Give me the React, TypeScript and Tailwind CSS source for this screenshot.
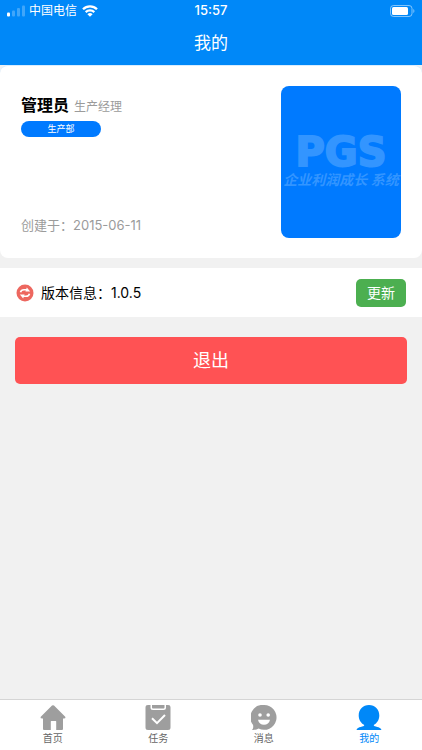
import React from 'react';

const HomeIcon = () => (
  <svg viewBox="0 0 26 26" className="size-[26px]" fill="currentColor" aria-hidden="true">
    <path d="M12 .6a1.500 1.500 0 0 1 2 0L25 11.500c.8.900.4 1.900-.7 1.900H23v10.300c0 .8-.5 1.300-1.300 1.300H16.200v-8.600c0-.3-.2-.5-.5-.5h-4.400c-.3 0-.5.2-.5.5V25H4.300C3.500 25 3 24.500 3 23.700V13.400H1.700c-1.100 0-1.500-1-.7-1.900z" />
  </svg>
);

const TaskIcon = () => (
  <svg viewBox="0 0 26 26" className="size-[26px]" aria-hidden="true">
    <path fill="currentColor" d="M3 0h2.500v2.500C5.500 4.200 6.300 5 8 5h10.500C20.200 5 21 4.200 21 2.500V0h2c1.700 0 2.500.8 2.500 2.500v20c0 1.700-.8 2.500-2.500 2.500H3C1.300 25 .5 24.200.5 22.500v-20C.5.800 1.300 0 3 0z" />
    <path fill="currentColor" d="M7 0h12.500v2.200c0 .9-.4 1.300-1.300 1.300H8.300C7.400 3.500 7 3.100 7 2.200z" />
    <path d="M7 13.200l5 5L20 10" fill="none" stroke="white" strokeWidth="2" />
  </svg>
);

const MessageIcon = () => (
  <svg viewBox="0 0 26 26" className="size-[26px]" aria-hidden="true">
    <path fill="currentColor" d="M13.200 0a12.400 12.400 0 1 1-5.600 23.500c-1.800 1.100-4.300 1.700-6.600 1.500 1.300-1.200 1.400-2.900 1.100-5A12.400 12.400 0 0 1 13.200 0z" />
    <circle cx="9" cy="10" r="1.800" fill="white" />
    <circle cx="17.200" cy="10" r="1.800" fill="white" />
    <path fill="white" d="M7 14.800h12c-.6 3.200-3 5-6 5s-5.400-1.800-6-5z" />
  </svg>
);

const UserIcon = () => (
  <svg viewBox="0 0 26 26" className="size-[26px]" fill="currentColor" aria-hidden="true">
    <path d="M13 0c6 0 10.300 4.600 10.300 10.500 0 4.200-2.300 7.700-5.600 9.600 0 2.200 6.800 1.300 7.800 4.900H.5c1-3.600 7.800-2.700 7.800-4.900-3.300-1.900-5.600-5.400-5.600-9.600C2.700 4.600 7 0 13 0z" />
  </svg>
);

const tabs = [
  { label: '首页', Icon: HomeIcon, active: false },
  { label: '任务', Icon: TaskIcon, active: false },
  { label: '消息', Icon: MessageIcon, active: false },
  { label: '我的', Icon: UserIcon, active: true },
];

function StatusBar() {
  return (
    <div className="grid h-5 grid-cols-3 items-center px-[7px] pt-px text-xs">
      <div className="flex items-center gap-1">
        <svg viewBox="0 0 18 12" className="h-3 w-[18px]" fill="white" aria-hidden="true">
          <rect x="0" y="7.500" width="3" height="4" rx="1" />
          <rect x="5" y="5.500" width="3" height="6" rx="1" opacity=".25" />
          <rect x="10" y="3" width="3" height="8.500" rx="1" opacity=".25" />
          <rect x="15" y="0.500" width="3" height="11" rx="1" opacity=".25" />
        </svg>
        <span className="whitespace-nowrap">中国电信</span>
        <svg viewBox="0 0 16 12" className="ml-px h-3 w-4" aria-hidden="true">
          <path d="M1 4.300a10 10 0 0 1 14 0M3.700 7.200a6.200 6.200 0 0 1 8.600 0" fill="none" stroke="white" strokeWidth="2.300" />
          <path d="M8 11.800L5.400 9.300a3.700 3.700 0 0 1 5.200 0z" fill="white" />
        </svg>
      </div>
      <time className="text-center text-[13px] font-medium">15:57</time>
      <svg viewBox="0 0 25 12" className="h-3 w-[25px] justify-self-end" aria-label="电量" role="img">
        <rect x=".5" y=".5" width="21.500" height="11" rx="3" fill="none" stroke="white" opacity=".5" />
        <rect x="2" y="2" width="16" height="8" rx="1.500" fill="white" />
        <path d="M23.300 4v4c1.500-.5 1.500-3.500 0-4z" fill="white" opacity=".5" />
      </svg>
    </div>
  );
}

export default function App() {
  return (
    <div className="flex min-h-screen flex-col bg-[#f1f1f1] font-['Inter','Noto_Sans_CJK_SC',sans-serif] text-black">
      <header className="bg-[#0088f8] text-white">
        <StatusBar />
        <h1 className="h-[45px] text-center text-[17px] leading-[47px]">我的</h1>
      </header>

      <main className="flex-1">
        <section className="flex justify-between rounded-lg border-t border-[#d9edff] bg-white px-[21px] py-5">
          <div className="flex flex-col pt-[7px]">
            <div className="flex items-baseline gap-[5px] leading-6">
              <h2 className="text-base font-bold">管理员</h2>
              <span className="text-xs text-[#9b9b9b]">生产经理</span>
            </div>
            <span className="mt-1 h-4 w-20 rounded-full bg-[#007aff] text-center text-[9px] leading-4 text-white">生产部</span>
            <p className="mt-auto pb-[5px] text-[13px] leading-4 text-[#9b9b9b]">创建于：2015-06-11</p>
          </div>
          <div className="flex h-[152px] w-[120px] flex-col items-center justify-center overflow-hidden rounded-lg bg-[#007aff] whitespace-nowrap text-[#3395ff]">
            <span className="font-['DejaVu_Sans'] text-[40px] leading-8 font-bold [-webkit-text-stroke:2px_#3395ff]">PGS</span>
            <span className="mt-1 text-[14px] leading-4 font-bold italic">企业利润成长 系统</span>
          </div>
        </section>

        <section className="mt-[10px] flex h-[49px] items-center bg-white px-4">
          <svg viewBox="0 0 18 18" className="size-[18px]" aria-hidden="true">
            <circle cx="9" cy="9" r="8.500" fill="#ed675f" />
            <path d="M4.500 8.200C5 6 6.500 5.700 8 5.700h3.500M13.500 9.800c-.5 2.200-2 2.500-3.500 2.500H6.500" fill="none" stroke="white" strokeWidth="1.600" />
            <path d="M10.800 3.500l3.400 3.900H9.400zM7.200 14.500l-3.400-3.900h4.800z" fill="white" />
          </svg>
          <p className="ml-[7px] text-sm">版本信息：1.0.5</p>
          <button type="button" className="ml-auto h-7 w-[50px] rounded-[5px] bg-[#4caf50] text-sm text-white">更新</button>
        </section>

        <div className="px-[15px] pt-5">
          <button type="button" className="h-[47px] w-full rounded-[5px] bg-[#ff5254] text-lg text-white">退出</button>
        </div>
      </main>

      <nav className="grid h-[51px] grid-cols-4 border-t border-[#d5d5d5] bg-white">
        {tabs.map(({ label, Icon, active }) => (
          <a
            key={label}
            href="#"
            aria-current={active ? 'page' : undefined}
            className={`flex flex-col items-center pt-[5px] text-[10px] leading-[14px] ${active ? 'text-[#0088f8]' : 'text-[#9e9e9e]'}`}
          >
            <Icon />
            <span className={active ? 'text-[#0088f8]' : 'text-[#666666]'}>{label}</span>
          </a>
        ))}
      </nav>
    </div>
  );
}
